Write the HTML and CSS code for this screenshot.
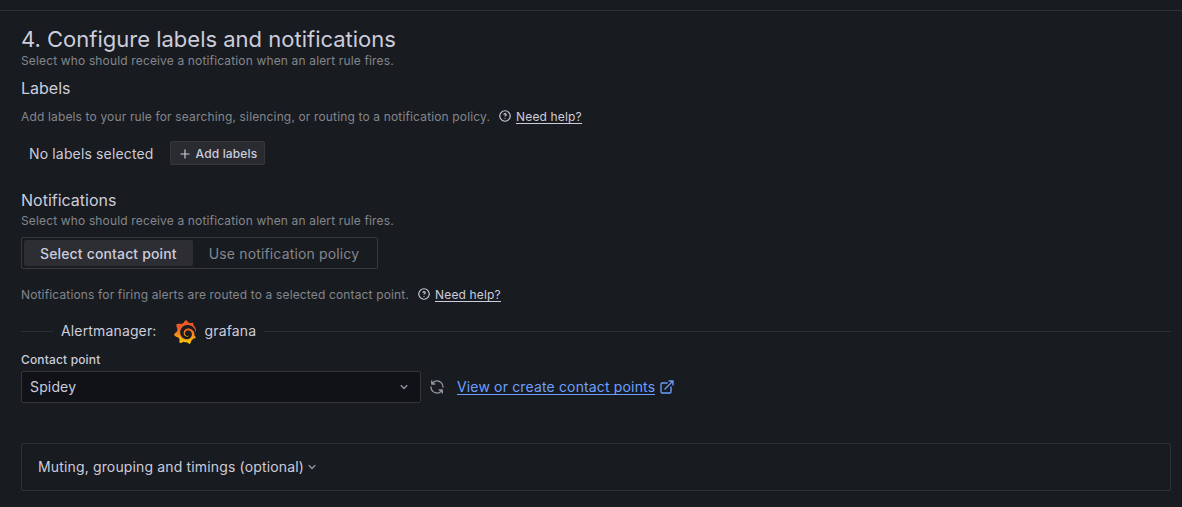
FILE: index.html
```html
<!DOCTYPE html>
<html lang="en">
<head>
<meta charset="utf-8">
<title>Configure labels and notifications</title>
<link rel="stylesheet" href="styles.css">
</head>
<body>
<svg class="defs" width="0" height="0">
  <defs>
    <symbol id="question" viewBox="0 0 24 24"><path d="M11.29,15.29a1.58,1.58,0,0,0-.12.15.76.76,0,0,0-.09.18.64.64,0,0,0-.06.18,1.36,1.36,0,0,0,0,.2.84.84,0,0,0,.08.38.9.9,0,0,0,.54.54.94.94,0,0,0,.76,0,.9.9,0,0,0,.54-.54A1,1,0,0,0,13,16a1,1,0,0,0-.29-.71A1,1,0,0,0,11.29,15.29ZM12,2A10,10,0,1,0,22,12,10,10,0,0,0,12,2Zm0,18a8,8,0,1,1,8-8A8,8,0,0,1,12,20ZM12,7A3,3,0,0,0,9.4,8.5a1,1,0,1,0,1.73,1A1,1,0,0,1,12,9a1,1,0,0,1,0,2,1,1,0,1,0,0,2,3,3,0,0,0,0-6Z"/></symbol>
    <symbol id="angle-down" viewBox="0 0 24 24"><path d="M17,9.17a1,1,0,0,0-1.41,0L12,12.71,8.46,9.17a1,1,0,0,0-1.41,0,1,1,0,0,0,0,1.42l4.24,4.24a1,1,0,0,0,1.42,0L17,10.59A1,1,0,0,0,17,9.17Z"/></symbol>
  </defs>
</svg>
<main class="section">
  <h3 class="title">4. Configure labels and notifications</h3>
  <p class="hint">Select who should receive a notification when an alert rule fires.</p>

  <h4 class="subtitle labels-title">Labels</h4>
  <div class="hint help-row labels-help">
    <span>Add labels to your rule for searching, silencing, or routing to a notification policy.</span>
    <span class="help"><svg class="icon-14"><use href="#question"/></svg><a class="help-link">Need help?</a></span>
  </div>
  <div class="labels-row">
    <span class="no-labels">No labels selected</span>
    <button class="add-button"><svg class="icon-14" viewBox="0 0 24 24"><path d="M19,11H13V5a1,1,0,0,0-2,0v6H5a1,1,0,0,0,0,2h6v6a1,1,0,0,0,2,0V13h6a1,1,0,0,0,0-2Z"/></svg>Add labels</button>
  </div>

  <h4 class="subtitle notifications-title">Notifications</h4>
  <p class="hint notifications-hint">Select who should receive a notification when an alert rule fires.</p>
  <div class="radio-group">
    <span class="radio active">Select contact point</span>
    <span class="radio">Use notification policy</span>
  </div>
  <div class="hint help-row routing-help">
    <span>Notifications for firing alerts are routed to a selected contact point.</span>
    <span class="help"><svg class="icon-14"><use href="#question"/></svg><a class="help-link">Need help?</a></span>
  </div>

  <div class="manager-row">
    <span class="rule rule-start"></span>
    <span>Alertmanager:</span>
    <svg class="logo" viewBox="0 0 351 365">
      <defs><linearGradient id="flame" gradientUnits="userSpaceOnUse" x1="175" y1="446" x2="175" y2="114"><stop offset="0" stop-color="#fff100"/><stop offset="1" stop-color="#f05a28"/></linearGradient></defs>
      <path fill="url(#flame)" d="M342,161.2c-0.6-6.1-1.6-13.1-3.6-20.9c-2-7.7-5-16.2-9.4-25c-4.4-8.8-10.1-17.9-17.5-26.8c-2.9-3.5-6.1-6.9-9.5-10.2c5.1-20.3-6.2-37.9-6.2-37.9c-19.5-1.2-31.9,6.1-36.5,9.4c-0.8-0.3-1.5-0.7-2.3-1c-3.3-1.3-6.7-2.6-10.3-3.7c-3.5-1.1-7.1-2.1-10.8-3c-3.7-0.9-7.4-1.6-11.2-2.2c-0.7-0.1-1.3-0.2-2-0.3c-8.5-27.2-32.9-38.6-32.9-38.6c-27.3,17.3-32.4,41.5-32.4,41.5s-0.1,0.5-0.3,1.4c-1.5,0.4-3,0.9-4.5,1.3c-2.1,0.6-4.2,1.4-6.2,2.2c-2.1,0.8-4.1,1.6-6.2,2.5c-4.1,1.8-8.2,3.8-12.2,6c-3.9,2.2-7.7,4.6-11.4,7.1c-0.5-0.2-1-0.4-1-0.4c-37.8-14.4-71.3,2.9-71.3,2.9c-3.1,40.2,15.1,65.5,18.7,70.1c-0.9,2.5-1.7,5-2.5,7.5c-2.8,9.1-4.9,18.4-6.2,28.1c-0.2,1.4-0.4,2.8-0.5,4.2C18.8,192.7,8.5,228,8.5,228c29.1,33.5,63.1,35.6,63.1,35.6c0,0,0.1-0.1,0.1-0.1c4.3,7.7,9.3,15,14.9,21.9c2.4,2.9,4.8,5.6,7.4,8.3c-10.6,30.4,1.5,55.6,1.5,55.6c32.4,1.2,53.7-14.2,58.2-17.7c3.2,1.1,6.5,2.1,9.8,2.9c10,2.6,20.2,4.1,30.4,4.5c2.5,0.1,5.1,0.2,7.6,0.1l1.2,0l0.8,0l1.6,0l1.6-0.1l0,0.1c15.3,21.8,42.1,24.9,42.1,24.9c19.1-20.1,20.2-40.1,20.2-44.4l0,0c0,0,0-0.1,0-0.3c0-0.4,0-0.6,0-0.6l0,0c0-0.3,0-0.6,0-0.9c4-2.8,7.8-5.8,11.4-9.1c7.6-6.9,14.3-14.8,19.9-23.3c0.5-0.8,1-1.6,1.5-2.4c21.6,1.2,36.9-13.4,36.9-13.4c-3.6-22.5-16.4-33.5-19.1-35.6l0,0c0,0-0.1-0.1-0.3-0.2c-0.2-0.1-0.2-0.2-0.2-0.2c0,0,0,0,0,0c-0.1-0.1-0.3-0.2-0.5-0.3c0.1-1.4,0.2-2.7,0.3-4.1c0.2-2.4,0.2-4.9,0.2-7.3l0-1.8l0-0.9l0-0.5c0-0.6,0-0.4,0-0.6l-0.1-1.5l-0.1-2c0-0.7-0.1-1.3-0.2-1.9c-0.1-0.6-0.1-1.3-0.2-1.9l-0.2-1.9l-0.3-1.9c-0.4-2.5-0.8-4.9-1.4-7.4c-2.3-9.7-6.1-18.9-11-27.2c-5-8.3-11.2-15.6-18.3-21.8c-7-6.2-14.9-11.2-23.1-14.9c-8.3-3.7-16.9-6.1-25.5-7.2c-4.3-0.6-8.6-0.8-12.9-0.7l-1.6,0l-0.4,0c-0.1,0-0.6,0-0.5,0l-0.7,0l-1.6,0.1c-0.6,0-1.2,0.1-1.7,0.1c-2.2,0.2-4.4,0.5-6.5,0.9c-8.6,1.6-16.7,4.7-23.8,9c-7.1,4.3-13.3,9.6-18.3,15.6c-5,6-8.9,12.7-11.6,19.6c-2.7,6.9-4.2,14.1-4.6,21c-0.1,1.7-0.1,3.5-0.1,5.2c0,0.4,0,0.9,0,1.3l0.1,1.4c0.1,0.8,0.1,1.7,0.2,2.5c0.3,3.5,1,6.9,1.9,10.1c1.9,6.5,4.9,12.4,8.6,17.4c3.7,5,8.2,9.1,12.9,12.4c4.7,3.2,9.8,5.5,14.8,7c5,1.5,10,2.1,14.7,2.1c0.6,0,1.2,0,1.7,0c0.3,0,0.6,0,0.9,0c0.3,0,0.6,0,0.9-0.1c0.5,0,1-0.1,1.5-0.1c0.1,0,0.3,0,0.4-0.1l0.5-0.1c0.3,0,0.6-0.1,0.9-0.1c0.6-0.1,1.1-0.2,1.7-0.3c0.6-0.1,1.1-0.2,1.6-0.4c1.1-0.2,2.1-0.6,3.1-0.9c2-0.7,4-1.5,5.7-2.4c1.8-0.9,3.4-2,5-3c0.4-0.3,0.9-0.6,1.3-1c1.6-1.3,1.9-3.7,0.6-5.3c-1.1-1.4-3.1-1.8-4.7-0.9c-0.4,0.2-0.8,0.4-1.2,0.6c-1.4,0.7-2.8,1.3-4.3,1.8c-1.5,0.5-3.1,0.9-4.7,1.2c-0.8,0.1-1.6,0.2-2.5,0.3c-0.4,0-0.8,0.1-1.3,0.1c-0.4,0-0.9,0-1.2,0c-0.4,0-0.8,0-1.2,0c-0.5,0-1,0-1.5-0.1c0,0-0.3,0-0.1,0l-0.2,0l-0.3,0c-0.2,0-0.5,0-0.7-0.1c-0.5-0.1-0.9-0.1-1.4-0.2c-3.7-0.5-7.4-1.6-10.9-3.2c-3.6-1.6-7-3.8-10.1-6.6c-3.1-2.8-5.8-6.1-7.9-9.9c-2.1-3.8-3.6-8-4.3-12.4c-0.3-2.2-0.5-4.5-0.4-6.7c0-0.6,0.1-1.2,0.1-1.8c0,0.2,0-0.1,0-0.1l0-0.2l0-0.5c0-0.3,0.1-0.6,0.1-0.9c0.1-1.2,0.3-2.4,0.5-3.6c1.7-9.6,6.5-19,13.9-26.1c1.9-1.8,3.9-3.4,6-4.9c2.1-1.5,4.4-2.8,6.8-3.9c2.4-1.1,4.8-2,7.4-2.7c2.5-0.7,5.1-1.1,7.8-1.4c1.3-0.1,2.6-0.2,4-0.2c0.4,0,0.6,0,0.9,0l1.1,0l0.7,0c0.3,0,0,0,0.1,0l0.3,0l1.1,0.1c2.9,0.2,5.7,0.6,8.5,1.3c5.6,1.2,11.1,3.3,16.2,6.1c10.2,5.7,18.9,14.5,24.2,25.1c2.7,5.3,4.6,11,5.5,16.9c0.2,1.5,0.4,3,0.5,4.5l0.1,1.1l0.1,1.1c0,0.4,0,0.8,0,1.1c0,0.4,0,0.8,0,1.1l0,1l0,1.1c0,0.7-0.1,1.9-0.1,2.6c-0.1,1.6-0.3,3.3-0.5,4.9c-0.2,1.6-0.5,3.2-0.8,4.8c-0.3,1.6-0.7,3.2-1.1,4.7c-0.8,3.1-1.8,6.2-3,9.3c-2.4,6-5.6,11.8-9.4,17.1c-7.7,10.6-18.2,19.2-30.2,24.7c-6,2.7-12.3,4.7-18.8,5.7c-3.2,0.6-6.5,0.9-9.8,1l-0.6,0l-0.5,0l-1.1,0l-1.6,0l-0.8,0c0.4,0-0.1,0-0.1,0l-0.3,0c-1.8,0-3.5-0.1-5.3-0.3c-7-0.5-13.9-1.8-20.7-3.7c-6.7-1.9-13.2-4.6-19.4-7.8c-12.3-6.6-23.4-15.6-32-26.5c-4.3-5.4-8.1-11.3-11.2-17.4c-3.1-6.1-5.6-12.6-7.4-19.1c-1.8-6.6-2.9-13.3-3.4-20.1l-0.1-1.3l0-0.3l0-0.3l0-0.6l0-1.1l0-0.3l0-0.4l0-0.8l0-1.6l0-0.3c0,0,0,0.1,0-0.1l0-0.6c0-0.8,0-1.7,0-2.5c0.1-3.3,0.4-6.8,0.8-10.2c0.4-3.4,1-6.9,1.7-10.3c0.7-3.4,1.5-6.8,2.5-10.2c1.9-6.7,4.3-13.2,7.1-19.3c5.7-12.2,13.1-23.1,22-31.8c2.2-2.2,4.5-4.2,6.9-6.2c2.4-1.9,4.9-3.7,7.5-5.4c2.5-1.7,5.2-3.2,7.9-4.6c1.3-0.7,2.7-1.4,4.1-2c0.7-0.3,1.4-0.6,2.1-0.9c0.7-0.3,1.4-0.6,2.1-0.9c2.8-1.2,5.7-2.2,8.7-3.1c0.7-0.2,1.5-0.4,2.2-0.7c0.7-0.2,1.5-0.4,2.2-0.6c1.5-0.4,3-0.8,4.5-1.1c0.7-0.2,1.5-0.3,2.3-0.5c0.8-0.2,1.5-0.3,2.3-0.5c0.8-0.1,1.5-0.3,2.3-0.4l1.1-0.2l1.2-0.2c0.8-0.1,1.5-0.2,2.3-0.3c0.9-0.1,1.7-0.2,2.6-0.3c0.7-0.1,1.9-0.2,2.6-0.3c0.5-0.1,1.1-0.1,1.6-0.2l1.1-0.1l0.5-0.1l0.6,0c0.9-0.1,1.7-0.1,2.6-0.2l1.3-0.1c0,0,0.5,0,0.1,0l0.3,0l0.6,0c0.7,0,1.5-0.1,2.2-0.1c2.9-0.1,5.9-0.1,8.8,0c5.8,0.2,11.5,0.9,17,1.9c11.1,2.1,21.5,5.6,31,10.3c9.5,4.6,17.9,10.3,25.3,16.5c0.5,0.4,0.9,0.8,1.4,1.2c0.4,0.4,0.9,0.8,1.3,1.2c0.9,0.8,1.7,1.6,2.6,2.4c0.9,0.8,1.7,1.6,2.5,2.4c0.8,0.8,1.6,1.6,2.4,2.5c3.1,3.3,6,6.6,8.6,10c5.2,6.7,9.4,13.5,12.7,19.9c0.2,0.4,0.4,0.8,0.6,1.2c0.2,0.4,0.4,0.8,0.6,1.2c0.4,0.8,0.8,1.6,1.1,2.4c0.4,0.8,0.7,1.5,1.1,2.3c0.3,0.8,0.7,1.5,1,2.3c1.2,3,2.4,5.9,3.3,8.6c1.5,4.4,2.6,8.3,3.5,11.7c0.3,1.4,1.6,2.3,3,2.1c1.5-0.1,2.6-1.3,2.6-2.8C342.6,170.4,342.5,166.1,342,161.2z"/>
    </svg>
    <span>grafana</span>
    <span class="rule rule-end"></span>
  </div>

  <label class="field-label">Contact point</label>
  <div class="contact-row">
    <div class="select"><span>Spidey</span><svg class="icon-16 muted"><use href="#angle-down"/></svg></div>
    <svg class="icon-16 muted refresh" viewBox="0 0 24 24"><path d="M19.91,15.51H15.38a1,1,0,0,0,0,2h2.4A8,8,0,0,1,4,12a1,1,0,1,0-2,0,10,10,0,0,0,16.88,7.23V21a1,1,0,0,0,2,0V16.5A1,1,0,0,0,19.91,15.51ZM12,2A10,10,0,0,0,5.12,4.77V3a1,1,0,0,0-2,0V7.5a1,1,0,0,0,1,1h4.5a1,1,0,0,0,0-2H6.22A8,8,0,0,1,20,12a1,1,0,0,0,2,0A10,10,0,0,0,12,2Z"/></svg>
    <a class="view-link"><span class="view-text">View or create contact points</span><svg class="icon-16" viewBox="0 0 24 24"><path d="M18,10.82a1,1,0,0,0-1,1V19a1,1,0,0,1-1,1H5a1,1,0,0,1-1-1V8A1,1,0,0,1,5,7h7.18a1,1,0,0,0,0-2H5A3,3,0,0,0,2,8V19a3,3,0,0,0,3,3H16a3,3,0,0,0,3-3V11.82A1,1,0,0,0,18,10.82Zm3.92-8.2a1,1,0,0,0-.54-.54A1,1,0,0,0,21,2H15a1,1,0,0,0,0,2h3.59L8.29,14.29a1,1,0,0,0,0,1.42,1,1,0,0,0,1.42,0L20,5.41V9a1,1,0,0,0,2,0V3A1,1,0,0,0,21.92,2.62Z"/></svg></a>
  </div>

  <div class="collapse"><span>Muting, grouping and timings (optional)</span><svg class="icon-16 muted"><use href="#angle-down"/></svg></div>
</main>
</body>
</html>
```
FILE: styles.css
```css
* { box-sizing: border-box; }
body {
  margin: 0;
  padding-top: 10px;
  height: 507px;
  overflow: hidden;
  background: #181b1f;
  color: #ccccdc;
  font: 400 14px/22px Inter, "Liberation Sans", sans-serif;
  letter-spacing: 0.15px;
}
.defs { display: none; }
svg { display: block; flex: none; fill: currentColor; }
.section { border-top: 1px solid #2d3034; padding: 14px 11px 0 21px; }
.title { margin: 0; font-size: 22px; line-height: 28px; font-weight: 400; letter-spacing: 0; }
.hint { margin: 0; font-size: 12px; line-height: 18px; letter-spacing: 0.15px; color: #84868e; }
.title + .hint { margin-top: -1px; }
.subtitle { margin: 0; font-size: 16px; line-height: 22px; font-weight: 400; letter-spacing: 0; }
.labels-title { margin-top: 7px; }
.help-row { display: flex; align-items: flex-start; gap: 8px; }
.labels-help { margin-top: 9px; }
.help { display: flex; align-items: center; gap: 4px; height: 18px; margin-top: -1px; color: #ccccdc; }
.help-link { height: 16px; line-height: 17px; border-bottom: 1px solid #ccccdc; }
.icon-14 { width: 14px; height: 14px; }
.icon-16 { width: 16px; height: 16px; }
.muted { color: #9697a3; }
.labels-row { display: flex; align-items: center; gap: 16px; height: 24px; margin-top: 15px; padding-left: 8px; }
.no-labels { padding-top: 2px; }
.add-button {
  display: flex; align-items: center; gap: 4px; height: 24px; padding: 1px 7px 0;
  border: 1px solid #36373d; border-radius: 2px; background: #2a2b30; color: #ccccdc;
  font: 500 12px/22px Inter, sans-serif; letter-spacing: 0.15px;
}
.notifications-title { margin-top: 24px; }
.notifications-hint { margin-top: 1px; }
.radio-group { display: inline-flex; margin-top: 7px; height: 32px; padding: 2px; border: 1px solid #37393f; border-radius: 2px; vertical-align: top; }
.radio { padding: 0 16px; line-height: 27px; color: #84868e; border-radius: 2px; }
.radio.active { background: #2c2e33; color: #ccccdc; font-weight: 500; }
.routing-help { margin-top: 17px; }
.manager-row { display: flex; align-items: center; height: 24px; margin-top: 15px; }
.rule { height: 1px; background: #2c2f33; }
.rule-start { width: 32px; margin-right: 8px; }
.rule-end { flex: 1; margin-left: 8px; }
.logo { width: 24px; height: 24px; margin: 2px 8px 0 16px; }
.field-label { display: block; margin-top: 9px; font-size: 12px; line-height: 16px; font-weight: 500; }
.contact-row { display: flex; align-items: center; margin-top: 3px; }
.select { display: flex; align-items: center; justify-content: space-between; width: 400px; height: 32px; padding: 0 8px; border: 1px solid #333539; border-radius: 2px; background: #111217; }
.refresh { margin-left: 8px; }
.view-link { display: flex; align-items: center; gap: 4px; margin-left: 12px; color: #6e9fff; }
.view-text { height: 18px; line-height: 19px; margin-bottom: 2px; border-bottom: 1px solid #6e9fff; }
.collapse { display: flex; align-items: center; height: 48px; margin-top: 40px; padding-left: 16px; border: 1px solid #2d3034; border-radius: 2px; }
```
